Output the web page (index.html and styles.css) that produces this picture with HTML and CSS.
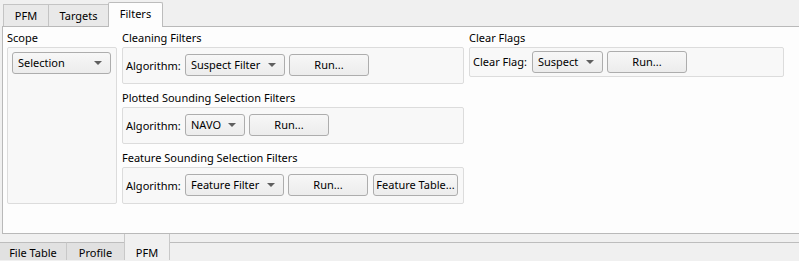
FILE: index.html
```html
<!DOCTYPE html>
<html lang="en">
<head>
  <meta charset="UTF-8">
  <title>PFM Filters</title>
  <link rel="stylesheet" href="styles.css">
</head>
<body>
  <div class="window">
    <div class="tabbar tabbar-top">
      <div class="tab tab-pfm">PFM</div>
      <div class="tab tab-targets">Targets</div>
      <div class="tab tab-filters active">Filters</div>
    </div>

    <div class="pane">
      <!-- scope -->
      <div class="col col-scope">
        <div class="title">Scope</div>
        <div class="box box-scope">
          <div class="combo w-scope">Selection</div>
        </div>
      </div>

      <!-- filters -->
      <div class="col col-filters">
        <div class="title">Cleaning Filters</div>
        <div class="box row">
          <div class="label">Algorithm:</div>
          <div class="combo w-suspect">Suspect Filter</div>
          <div class="button w-run">Run...</div>
        </div>

        <div class="title">Plotted Sounding Selection Filters</div>
        <div class="box row">
          <div class="label">Algorithm:</div>
          <div class="combo w-navo">NAVO</div>
          <div class="button w-run">Run...</div>
        </div>

        <div class="title">Feature Sounding Selection Filters</div>
        <div class="box row">
          <div class="label">Algorithm:</div>
          <div class="combo w-feature">Feature Filter</div>
          <div class="button w-run">Run...</div>
          <div class="button w-table">Feature Table...</div>
        </div>
      </div>

      <!-- clear flags -->
      <div class="col col-flags">
        <div class="title">Clear Flags</div>
        <div class="box row row-small">
          <div class="label">Clear Flag:</div>
          <div class="combo w-flag">Suspect</div>
          <div class="button w-run">Run...</div>
        </div>
      </div>
    </div>

    <div class="tabbar tabbar-bottom">
      <div class="btab btab-file">File Table</div>
      <div class="btab btab-profile">Profile</div>
      <div class="btab btab-pfm active">PFM</div>
      <div class="btab-rest"></div>
    </div>
  </div>
</body>
</html>
```

FILE: styles.css
```css
body {
  margin: 0;
  padding: 0;
  background-color: #f0f0f0;
  font-family: 'Noto Sans', 'Open Sans', sans-serif;
  font-size: 11px;
  color: #000;
  overflow: hidden;
}

.window {
  width: 799px;
  height: 261px;
  display: flex;
  flex-direction: column;
}

/* pestañas de arriba */
.tabbar-top {
  display: flex;
  align-items: flex-end;
  height: 26px;
  padding-left: 3px;
}

.tab {
  box-sizing: border-box;
  height: 22px;
  line-height: 21px;
  text-align: center;
  background-color: #e9e9e9;
  border: 1px solid #c4c4c4;
  border-bottom: none;
  margin-right: -1px;
}

.tab-pfm { width: 46px; }
.tab-targets { width: 61px; }

.tab-filters {
  width: 55px;
}

.tab.active {
  height: 25px;
  line-height: 22px;
  margin-bottom: -1px;
  background-color: #fdfdfd;
  border-color: #bcbcbc;
  border-radius: 2px 2px 0 0;
  position: relative;
  z-index: 1;
}

/* panel */
.pane {
  box-sizing: border-box;
  height: 209px;
  margin-left: 2px;
  margin-right: -1px;
  background-color: #fdfdfd;
  border: 1px solid #b9b9b9;
  padding-left: 4px;
  display: flex;
  gap: 5px;
}

.col {
  display: flex;
  flex-direction: column;
}

.col-scope { width: 110px; }
.col-filters { width: 342px; }
.col-flags { width: 315px; }

.title {
  height: 20px;
  line-height: 21px;
  white-space: nowrap;
}

.col-filters .title + .box ~ .title {
  margin-top: 3px;
}

.box {
  box-sizing: border-box;
  background-color: #f8f8f8;
  border: 1px solid #dcdcdc;
  border-radius: 2px;
}

.box-scope {
  height: 157px;
  padding: 4px 0 0 4px;
}

.row {
  height: 37px;
  display: flex;
  align-items: center;
  padding-left: 3px;
  gap: 4px;
}

.row-small {
  height: 30px;
}

.label {
  width: 55px;
  white-space: nowrap;
}

/* combos y botones */
.combo,
.button {
  box-sizing: border-box;
  height: 22px;
  line-height: 20px;
  border: 1px solid #adadad;
  border-radius: 3px;
  background: linear-gradient(#f7f7f7, #ececec);
  white-space: nowrap;
}

.combo {
  position: relative;
  padding-left: 5px;
}

.combo::after {
  content: "";
  position: absolute;
  right: 8px;
  top: 8px;
  border-left: 4px solid transparent;
  border-right: 4px solid transparent;
  border-top: 4px solid #5f5f5f;
}

.button {
  text-align: center;
}

.w-scope { width: 99px; }
.w-suspect { width: 100px; }
.w-navo { width: 60px; }
.w-feature { width: 99px; }
.w-flag { width: 71px; }
.w-run { width: 80px; }
.w-table { width: 85px; margin-left: 1px; }

/* pestañas de abajo */
.tabbar-bottom {
  display: flex;
  height: 27px;
}

.btab {
  box-sizing: border-box;
  height: 18px;
  margin-top: 8px;
  line-height: 20px;
  text-align: center;
  background-color: #e1e1e1;
  border-top: 1px solid #bdbdbd;
  border-right: 1px solid #c8c8c8;
}

.btab-file { width: 67px; }
.btab-profile { width: 58px; }

.btab.active {
  width: 46px;
  height: 26px;
  margin-top: 0;
  padding-top: 9px;
  line-height: 19px;
  background-color: #f0f0f0;
  border-top: none;
  border-left: 1px solid #c8c8c8;
  margin-left: -1px;
}

.btab-rest {
  flex: 1;
  margin-top: 8px;
  border-top: 1px solid #bdbdbd;
}
```
